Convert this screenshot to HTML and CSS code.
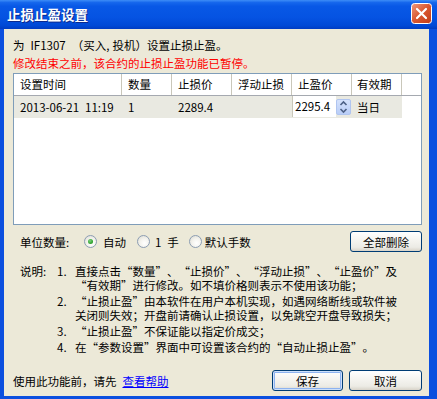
FILE: index.html
```html
<!DOCTYPE html>
<html lang="zh-CN">
<head>
<meta charset="utf-8">
<title>止损止盈设置</title>
<link rel="stylesheet" href="styles.css">
</head>
<body>
<div class="window">
  <div class="titlebar">
    <span class="title">止损止盈设置</span>
    <span class="close">
      <svg width="21" height="21" viewBox="0 0 21 21">
        <defs>
          <linearGradient id="cg" x1="0" y1="0" x2="1" y2="1">
            <stop offset="0" stop-color="#EE9A7E"/>
            <stop offset="0.5" stop-color="#D9562F"/>
            <stop offset="1" stop-color="#C13C17"/>
          </linearGradient>
        </defs>
        <rect x="0.5" y="0.5" width="20" height="20" rx="3" fill="url(#cg)" stroke="#fff"/>
        <path d="M6 6 L15 15 M15 6 L6 15" stroke="#fff" stroke-width="2.2" stroke-linecap="round"/>
      </svg>
    </span>
  </div>
  <div class="frame">
    <p class="line">为 IF1307 （买入<span class="comma">,</span>投机）设置止损止盈。</p>
    <p class="line warn">修改结束之前，该合约的止损止盈功能已暂停。</p>

    <div class="grid">
      <div class="thead">
        <div class="th">设置时间</div>
        <div class="th">数量</div>
        <div class="th">止损价</div>
        <div class="th">浮动止损</div>
        <div class="th">止盈价</div>
        <div class="th">有效期</div>
        <div class="th last"></div>
      </div>
      <div class="trow">
        <div class="td">2013-06-21 11:19</div>
        <div class="td">1</div>
        <div class="td">2289.4</div>
        <div class="td"></div>
        <div class="td edit">
          <span class="editbox">2295.4</span>
          <span class="spin">
            <svg width="15" height="16" viewBox="0 0 15 16">
              <path d="M4.5 6 L7.5 3 L10.5 6" fill="none" stroke="#4D6185" stroke-width="1.6"/>
              <path d="M4.5 10 L7.5 13 L10.5 10" fill="none" stroke="#4D6185" stroke-width="1.6"/>
            </svg>
          </span>
        </div>
        <div class="td">当日</div>
        <div class="td blank"></div>
      </div>
    </div>

    <div class="options">
      <span class="optlabel">单位数量:</span>
      <label class="radio r1"><span class="dot checked"></span>自动</label>
      <label class="radio r2"><span class="dot"></span>1 手</label>
      <label class="radio r3"><span class="dot"></span>默认手数</label>
      <button class="btn wide">全部删除</button>
    </div>

    <div class="notes">
      <span class="nlabel">说明:</span>
      <ol class="nlist">
        <li><span class="num">1.</span><span class="txt">直接点击“数量”、“止损价”、“浮动止损”、“止盈价”及<br><span class="q">“有效期”进行修改。如不填价格则表示不使用该功能；</span></span></li>
        <li><span class="num">2.</span><span class="txt"><span class="q">“止损止盈”由本软件在用户本机实现，如遇网络断线或软件被</span><br>关闭则失效；开盘前请确认止损设置，以免跳空开盘导致损失；</span></li>
        <li><span class="num">3.</span><span class="txt"><span class="q">“止损止盈”不保证能以指定价成交；</span></span></li>
        <li><span class="num">4.</span><span class="txt">在“参数设置”界面中可设置该合约的“自动止损止盈”。</span></li>
      </ol>
    </div>

    <div class="footer">
      <span class="help">使用此功能前，请先 <a href="#" class="link">查看帮助</a></span>
      <button class="btn save">保存</button>
      <button class="btn cancel">取消</button>
    </div>
  </div>
</div>
</body>
</html>
```

FILE: styles.css
```css
* { box-sizing: border-box; margin: 0; padding: 0; }
html, body { width: 437px; height: 399px; overflow: hidden; }
body {
  font-family: "Noto Sans CJK SC", "Noto Sans", sans-serif;
  font-size: 11.5px;
  color: #000;
  background: #0B4FDF;
  text-spacing-trim: space-all;
  word-spacing: 3.4px;
}
.window { width: 437px; height: 399px; display: flex; flex-direction: column; }

.titlebar {
  height: 29px;
  flex: none;
  display: flex;
  align-items: center;
  justify-content: space-between;
  padding: 0 5px 0 7px;
  background: linear-gradient(to bottom, #3D8DF7 0%, #1566EC 9%, #0858E6 22%, #0553E2 60%, #0049D6 88%, #003CC2 100%);
}
.title {
  color: #fff;
  font-weight: bold;
  font-size: 13.5px;
  line-height: 29px;
  text-shadow: 1px 1px 0 #0B2A8E;
}
.close { display: block; width: 21px; height: 21px; margin-top: -2px; }
.close svg { display: block; }

.frame {
  flex: 1;
  display: flex;
  flex-direction: column;
  background: #ECE9D8;
  border-left: 4px solid #0B4FDF;
  border-right: 8px solid #0B4FDF;
  border-bottom: 3px solid #0B4FDF;
  padding: 7px 7px 5px 9px;
}

.line { line-height: 18px; white-space: nowrap; }
.comma { margin-right: 3px; }
.warn { color: #F00; font-feature-settings: "fwid"; }

.grid {
  margin-top: 1px;
  height: 152px;
  background: #fff;
  border: 1px solid #7F9DB9;
}
.thead, .trow {
  display: grid;
  grid-template-columns: 108px 50px 60px 60px 60px 50px 1fr;
}
.thead { height: 22px; border-bottom: 1px solid #A5A9B0; }
.th {
  border-right: 1px solid #C9C7BA;
  padding-left: 6px;
  line-height: 20px;
  white-space: nowrap;
}
.th.last { border-right: 0; }
.th:nth-child(6) { padding-left: 5px; }
.trow { height: 22px; }
.td {
  background: #E9E9E1;
  padding-left: 6px;
  line-height: 22px;
  white-space: nowrap;
}
.td:nth-child(6) { padding-left: 5px; }
.td.blank { background: #fff; }
.td.edit { padding: 0; display: flex; align-items: center; background: #E9E9E1; }
.editbox {
  width: 44px;
  height: 21px;
  background: #fff;
  border-left: 1px solid #C9C7BA;
  padding-left: 2px;
  line-height: 21px;
  align-self: flex-start;
}
.spin {
  width: 15px;
  height: 16px;
  background: linear-gradient(to bottom, #D5E2FC, #B9CDF7);
  border: 1px solid #B0C5F0;
  border-radius: 2px;
  display: block;
}
.spin svg { display: block; margin: -1px 0 0 -1px; }

.options {
  margin-top: 6px;
  height: 21px;
  display: flex;
  align-items: center;
  padding-left: 7px;
}
.optlabel { width: 64px; white-space: nowrap; }
.radio { display: flex; align-items: center; white-space: nowrap; }
.r2 { margin-left: 11px; }
.r3 { margin-left: 10px; }
.dot {
  width: 13px;
  height: 13px;
  border-radius: 50%;
  border: 1px solid #8C9DB3;
  background: radial-gradient(circle at 60% 65%, #FFFFFF 0%, #F4F3EE 45%, #D9D8CE 100%);
  margin-right: 5px;
  position: relative;
}
.r1 .dot { margin-right: 6px; }
.r3 .dot { margin-right: 3px; }
.dot.checked::after {
  content: "";
  position: absolute;
  left: 3px;
  top: 3px;
  width: 5px;
  height: 5px;
  border-radius: 50%;
  background: radial-gradient(circle at 40% 35%, #7FD07F 0%, #31A531 60%, #1E8A1E 100%);
}

.btn {
  font-family: inherit;
  font-size: 11.5px;
  color: #000;
  height: 21px;
  border: 1px solid #003C74;
  border-radius: 3px;
  background: linear-gradient(to bottom, #FFFFFF 0%, #F6F5F1 40%, #ECEBE5 80%, #D8D3C8 100%);
  cursor: default;
}
.wide { margin-left: auto; width: 72px; }

.notes {
  margin-top: 12px;
  display: flex;
  padding-left: 7px;
  line-height: 14px;
}
.nlabel { width: 37px; white-space: nowrap; }
.nlist { list-style: none; display: flex; flex-direction: column; gap: 2px; }
.nlist li { display: flex; white-space: nowrap; }
.num { width: 18px; }
.txt { display: block; font-feature-settings: "fwid"; }

.footer {
  margin-top: auto;
  height: 21px;
  display: flex;
  align-items: center;
}
.help { flex: 1; white-space: nowrap; }
.link { color: #0000FF; text-decoration: underline; }
.save { width: 71px; box-shadow: inset 0 0 0 1px #CDE0FA, inset 0 0 0 2px #8EB3F0; }
.cancel { width: 73px; margin-left: 6px; }
```
